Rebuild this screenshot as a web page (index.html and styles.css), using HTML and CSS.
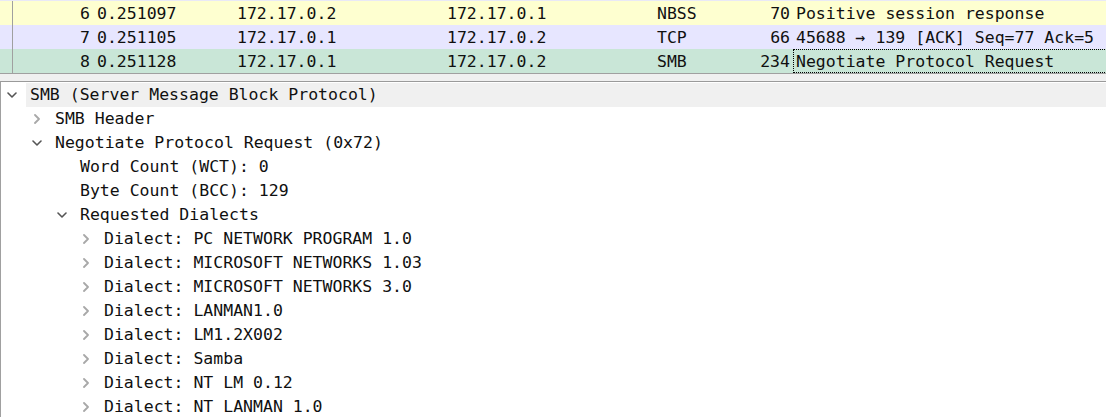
FILE: index.html
```html
<!DOCTYPE html>
<html>
<head>
<meta charset="utf-8">
<link rel="stylesheet" href="styles.css">
</head>
<body>
<div class="app">
  <div class="plist">
    <div class="strip"></div>
    <div class="prow nbss">
      <span class="c-mark"></span><span class="c-no">6</span><span class="c-time">0.251097</span><span class="c-src">172.17.0.2</span><span class="c-dst">172.17.0.1</span><span class="c-proto">NBSS</span><span class="c-len">70</span><span class="c-info">Positive session response</span>
    </div>
    <div class="prow tcp">
      <span class="c-mark"></span><span class="c-no">7</span><span class="c-time">0.251105</span><span class="c-src">172.17.0.1</span><span class="c-dst">172.17.0.2</span><span class="c-proto">TCP</span><span class="c-len">66</span><span class="c-info">45688 → 139 [ACK] Seq=77 Ack=5</span>
    </div>
    <div class="prow smb">
      <span class="c-mark"></span><span class="c-no">8</span><span class="c-time">0.251128</span><span class="c-src">172.17.0.1</span><span class="c-dst">172.17.0.2</span><span class="c-proto">SMB</span><span class="c-len">234</span><span class="c-info focus">Negotiate Protocol Request</span>
    </div>
  </div>
  <div class="splitter"></div>
  <div class="tree">
    <div class="node l0 hl"><span class="tw open"><svg width="10" height="6" viewBox="0 0 10 6"><path d="M1 1 L5 5 L9 1" /></svg></span><span class="lbl">SMB (Server Message Block Protocol)</span></div>
    <div class="node l1"><span class="tw closed"><svg width="10" height="10" viewBox="0 0 10 10"><path d="M3 1 L7 5 L3 9" /></svg></span><span class="lbl">SMB Header</span></div>
    <div class="node l1"><span class="tw open"><svg width="10" height="6" viewBox="0 0 10 6"><path d="M1 1 L5 5 L9 1" /></svg></span><span class="lbl">Negotiate Protocol Request (0x72)</span></div>
    <div class="node l2"><span class="tw"></span><span class="lbl">Word Count (WCT): 0</span></div>
    <div class="node l2"><span class="tw"></span><span class="lbl">Byte Count (BCC): 129</span></div>
    <div class="node l2"><span class="tw open"><svg width="10" height="6" viewBox="0 0 10 6"><path d="M1 1 L5 5 L9 1" /></svg></span><span class="lbl">Requested Dialects</span></div>
    <div class="node l3"><span class="tw closed"><svg width="10" height="10" viewBox="0 0 10 10"><path d="M3 1 L7 5 L3 9" /></svg></span><span class="lbl">Dialect: PC NETWORK PROGRAM 1.0</span></div>
    <div class="node l3"><span class="tw closed"><svg width="10" height="10" viewBox="0 0 10 10"><path d="M3 1 L7 5 L3 9" /></svg></span><span class="lbl">Dialect: MICROSOFT NETWORKS 1.03</span></div>
    <div class="node l3"><span class="tw closed"><svg width="10" height="10" viewBox="0 0 10 10"><path d="M3 1 L7 5 L3 9" /></svg></span><span class="lbl">Dialect: MICROSOFT NETWORKS 3.0</span></div>
    <div class="node l3"><span class="tw closed"><svg width="10" height="10" viewBox="0 0 10 10"><path d="M3 1 L7 5 L3 9" /></svg></span><span class="lbl">Dialect: LANMAN1.0</span></div>
    <div class="node l3"><span class="tw closed"><svg width="10" height="10" viewBox="0 0 10 10"><path d="M3 1 L7 5 L3 9" /></svg></span><span class="lbl">Dialect: LM1.2X002</span></div>
    <div class="node l3"><span class="tw closed"><svg width="10" height="10" viewBox="0 0 10 10"><path d="M3 1 L7 5 L3 9" /></svg></span><span class="lbl">Dialect: Samba</span></div>
    <div class="node l3"><span class="tw closed"><svg width="10" height="10" viewBox="0 0 10 10"><path d="M3 1 L7 5 L3 9" /></svg></span><span class="lbl">Dialect: NT LM 0.12</span></div>
    <div class="node l3"><span class="tw closed"><svg width="10" height="10" viewBox="0 0 10 10"><path d="M3 1 L7 5 L3 9" /></svg></span><span class="lbl">Dialect: NT LANMAN 1.0</span></div>
  </div>
</div>
</body>
</html>
```

FILE: styles.css
```css
html, body {
  margin: 0;
  padding: 0;
  width: 1106px;
  height: 417px;
  overflow: hidden;
  background: #f0f0f0;
}

.app {
  display: flex;
  flex-direction: column;
  height: 417px;
  font-family: "DejaVu Sans Mono", "Liberation Mono", monospace;
  font-size: 16.5px;
  color: #101010;
}

.plist {
  display: flex;
  flex-direction: column;
  overflow: hidden;
  border-bottom: 1px solid #a0a0a0;
}

.strip {
  height: 1px;
  background: #e9e9f6;
}

.prow {
  display: flex;
  flex-shrink: 0;
  height: 24px;
  line-height: 25px;
  white-space: pre;
}

.prow span {
  flex-shrink: 0;
  display: block;
  box-sizing: border-box;
  overflow: hidden;
}

.nbss { background: #feffd0; }
.tcp  { background: #e7e6ff; }
.smb  { background: #c9e6d7; }

.c-mark {
  width: 13px;
  border-right: 1px solid #a0a0a0;
}
.c-no {
  width: 80px;
  text-align: right;
  padding-right: 3px;
}
.c-time { width: 140px; padding-left: 4px; }
.c-src  { width: 210px; padding-left: 4px; }
.c-dst  { width: 210px; padding-left: 4px; }
.c-proto { width: 87px; padding-left: 4px; }
.c-len {
  width: 53px;
  text-align: right;
  padding-right: 3px;
}
.c-info {
  width: 400px;
  padding-left: 3px;
}
.c-info.focus {
  outline: 1px dotted #000;
  outline-offset: -1px;
}

.splitter {
  height: 7px;
  background: #f0f0f0;
}

.tree {
  flex: 1;
  background: #fff;
  border-top: 1px solid #9a9a9a;
  border-left: 1px solid #a0a0a0;
  padding-top: 1px;
  overflow: hidden;
}

.node {
  display: flex;
  align-items: center;
  height: 24px;
  white-space: pre;
}

.l0 { padding-left: 0; }
.l1 { padding-left: 25px; }
.l2 { padding-left: 50px; }
.l3 { padding-left: 74px; }

.tw {
  width: 25px;
  height: 24px;
  flex-shrink: 0;
  display: flex;
  align-items: center;
}
.tw svg {
  margin-left: 6px;
  display: block;
}
.tw svg path {
  fill: none;
  stroke-width: 1.6;
  stroke-linecap: round;
  stroke-linejoin: round;
}
.tw.open svg path { stroke: #555; }
.tw.closed svg path { stroke: #a8a8a8; stroke-width: 1.8; }

.lbl {
  flex: 1;
  height: 24px;
  line-height: 24px;
  padding-left: 4px;
}
.hl .lbl {
  background: #f0f0f0;
}
```
